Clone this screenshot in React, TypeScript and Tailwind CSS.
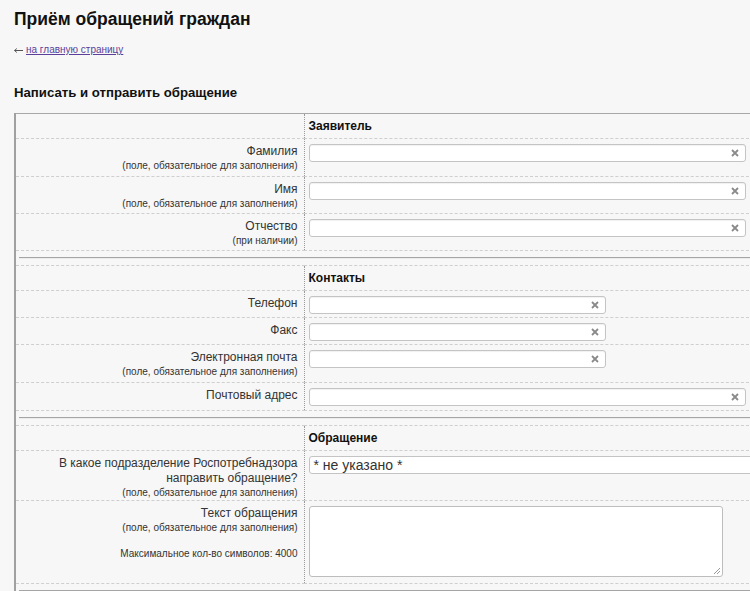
import React from "react";

const Clear = () => (
  <svg
    width="8"
    height="8"
    viewBox="0 0 8 8"
    className="absolute right-[6px] top-[4px]"
  >
    <path d="M1 1L7 7M7 1L1 7" stroke="#8a8a8a" strokeWidth="1.8" />
  </svg>
);

function Input({ w }: { w: string }) {
  return (
    <div
      className={`relative h-[18px] bg-white border border-[#c4c4c4] rounded-[3px] shadow-[inset_0_1px_1px_rgba(0,0,0,0.06)] ${w}`}
    >
      <Clear />
    </div>
  );
}

function Label({ main, note, h }: { main: React.ReactNode; note?: string; h: string }) {
  return (
    <td
      className={`text-right align-top pr-[6px] pt-[5px] border-r border-dotted border-[#9a9a9a] ${h}`}
    >
      <div className="text-[12px] leading-[15px] text-[#333]">{main}</div>
      {note && <div className="text-[10px] leading-[13px] text-[#333]">{note}</div>}
    </td>
  );
}

function Header({ title }: { title: string }) {
  return (
    <tr className="border-b border-dashed border-[#cfcfcf]">
      <td className="border-r border-dotted border-[#9a9a9a] h-[25px]" />
      <td className="pl-[4px] text-[12px] font-bold text-[#111] align-middle">{title}</td>
    </tr>
  );
}

function Sep() {
  return (
    <tr className="border-b border-dashed border-[#cfcfcf]">
      <td colSpan={2} className="h-[15px] pl-[3px] pr-0 align-middle">
        <div className="border-t border-t-[#a5a5a5] border-b border-b-[#ececec] h-[2px]" />
      </td>
    </tr>
  );
}

const REQ = "(поле, обязательное для заполнения)";

export default function App() {
  return (
    <div className="w-[750px] h-[591px] overflow-hidden bg-[#f7f7f7] px-[14px] font-['Liberation_Sans',Arial,sans-serif] text-[#222]">
      <h1 className="pt-[8px] text-[17.5px] leading-[22px] font-bold text-[#111]">
        Приём обращений граждан
      </h1>
      <div className="mt-[14px] h-[12px] flex items-center gap-[3px] text-[10px] leading-[12px]">
        <svg width="9" height="5" viewBox="0 0 9 5" className="mt-[1px]">
          <path d="M0.5 2.5H9M2.8 0.5L0.6 2.5L2.8 4.5" stroke="#555" strokeWidth="1" fill="none" />
        </svg>
        <a href="#" className="underline text-[#5b3f99]">
          на главную страницу
        </a>
      </div>
      <h2 className="mt-[29px] text-[13.2px] leading-[16px] font-bold text-[#111]">
        Написать и отправить обращение
      </h2>
      <table className="mt-[12px] w-[745px] table-fixed border-collapse border-t border-t-[#a8a8a8] border-l-2 border-l-[#a0a0a0]">
        <colgroup>
          <col className="w-[289px]" />
          <col />
        </colgroup>
        <tbody>
          <Header title="Заявитель" />
          <tr className="border-b border-dashed border-[#cfcfcf]">
            <Label main="Фамилия" note={REQ} h="h-[38px]" />
            <td className="align-top pl-[4px] pt-[5px]">
              <Input w="w-[437px]" />
            </td>
          </tr>
          <tr className="border-b border-dashed border-[#cfcfcf]">
            <Label main="Имя" note={REQ} h="h-[37px]" />
            <td className="align-top pl-[4px] pt-[5px]">
              <Input w="w-[437px]" />
            </td>
          </tr>
          <tr className="border-b border-dashed border-[#cfcfcf]">
            <Label main="Отчество" note="(при наличии)" h="h-[37px]" />
            <td className="align-top pl-[4px] pt-[5px]">
              <Input w="w-[437px]" />
            </td>
          </tr>
          <Sep />
          <Header title="Контакты" />
          <tr className="border-b border-dashed border-[#cfcfcf]">
            <Label main="Телефон" h="h-[27px]" />
            <td className="align-top pl-[4px] pt-[5px]">
              <Input w="w-[297px]" />
            </td>
          </tr>
          <tr className="border-b border-dashed border-[#cfcfcf]">
            <Label main="Факс" h="h-[27px]" />
            <td className="align-top pl-[4px] pt-[5px]">
              <Input w="w-[297px]" />
            </td>
          </tr>
          <tr className="border-b border-dashed border-[#cfcfcf]">
            <Label main="Электронная почта" note={REQ} h="h-[38px]" />
            <td className="align-top pl-[4px] pt-[5px]">
              <Input w="w-[297px]" />
            </td>
          </tr>
          <tr className="border-b border-dashed border-[#cfcfcf]">
            <Label main="Почтовый адрес" h="h-[28px]" />
            <td className="align-top pl-[4px] pt-[5px]">
              <Input w="w-[437px]" />
            </td>
          </tr>
          <Sep />
          <Header title="Обращение" />
          <tr className="border-b border-dashed border-[#cfcfcf]">
            <Label
              main={
                <>
                  В какое подразделение Роспотребнадзора
                  <br />
                  направить обращение?
                </>
              }
              note={REQ}
              h="h-[50px]"
            />
            <td className="align-top pl-[4px] pt-[5px]">
              <div className="h-[18px] w-[450px] bg-white border border-[#c4c4c4] rounded-[3px] pl-[4px] text-[14px] leading-[16px] text-[#333]">
                * не указано *
              </div>
            </td>
          </tr>
          <tr className="border-b border-dashed border-[#cfcfcf]">
            <td className="text-right align-top pr-[6px] pt-[5px] border-r border-dotted border-[#9a9a9a] h-[83px]">
              <div className="text-[12px] leading-[15px] text-[#333]">Текст обращения</div>
              <div className="text-[10px] leading-[13px] text-[#333]">{REQ}</div>
              <div className="mt-[13px] text-[10px] leading-[13px] text-[#333]">
                Максимальное кол-во символов: 4000
              </div>
            </td>
            <td className="align-top pl-[4px] pt-[5px]">
              <div className="relative h-[71px] w-[414px] bg-white border border-[#bdbdbd] rounded-[3px]">
                <svg width="8" height="8" viewBox="0 0 8 8" className="absolute right-[1px] bottom-[1px]">
                  <path d="M7 1L1 7M7 4L4 7" stroke="#999" strokeWidth="1" />
                </svg>
              </div>
            </td>
          </tr>
          <Sep />
        </tbody>
      </table>
    </div>
  );
}
